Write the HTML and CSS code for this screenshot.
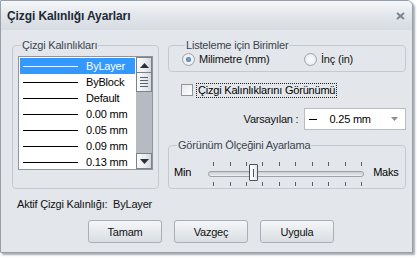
FILE: index.html
```html
<!DOCTYPE html>
<html lang="tr">
<head>
    <meta charset="UTF-8">
    <meta name="viewport" content="width=device-width, initial-scale=1.0">
    <title>Çizgi Kalınlığı Ayarları</title>
    <link rel="stylesheet" href="styles.css">
</head>
<body>

    <div class="window">
        <div class="titlebar">
            <span class="title">Çizgi Kalınlığı Ayarları</span>
            <svg class="close" width="9" height="8" viewBox="0 0 9 8">
                <path d="M1 1 L8 7 M8 1 L1 7" stroke="#7b8591" stroke-width="2" fill="none"/>
            </svg>
        </div>

        <div class="content">
            <div class="main">
                <!-- çizgi kalınlıkları listesi -->
                <fieldset class="group group-list">
                    <legend>Çizgi Kalınlıkları</legend>
                    <div class="listbox">
                        <div class="rows">
                            <div class="row selected"><span class="line"></span><span>ByLayer</span></div>
                            <div class="row"><span class="line"></span><span>ByBlock</span></div>
                            <div class="row"><span class="line"></span><span>Default</span></div>
                            <div class="row"><span class="line"></span><span>0.00 mm</span></div>
                            <div class="row"><span class="line"></span><span>0.05 mm</span></div>
                            <div class="row"><span class="line"></span><span>0.09 mm</span></div>
                            <div class="row"><span class="line"></span><span>0.13 mm</span></div>
                        </div>
                        <div class="scrollbar">
                            <div class="sb-btn">
                                <svg width="9" height="5" viewBox="0 0 9 5"><path d="M0 5 L4.5 0 L9 5 Z" fill="#2b2f36"/></svg>
                            </div>
                            <div class="sb-thumb">
                                <span></span><span></span><span></span><span></span>
                            </div>
                            <div class="sb-track"></div>
                            <div class="sb-btn">
                                <svg width="9" height="5" viewBox="0 0 9 5"><path d="M0 0 L4.5 5 L9 0 Z" fill="#2b2f36"/></svg>
                            </div>
                        </div>
                    </div>
                </fieldset>

                <div class="side">
                    <!-- birimler -->
                    <fieldset class="group group-units">
                        <legend>Listeleme için Birimler</legend>
                        <div class="radios">
                            <label class="radio radio-mm"><span class="dot checked"></span>Milimetre (mm)</label>
                            <label class="radio"><span class="dot"></span>İnç (in)</label>
                        </div>
                    </fieldset>

                    <div class="check-row">
                        <span class="checkbox"></span>
                        <span class="focus">Çizgi Kalınlıklarını Görünümü</span>
                    </div>

                    <div class="default-row">
                        <span class="default-label">Varsayılan :</span>
                        <div class="combo">
                            <span class="dash"></span>
                            <span class="combo-text">0.25 mm</span>
                            <svg class="combo-arrow" width="7" height="4" viewBox="0 0 7 4"><path d="M0 0 L3.5 4 L7 0 Z" fill="#8a9099"/></svg>
                        </div>
                    </div>

                    <!-- görünüm ölçeği -->
                    <fieldset class="group group-scale">
                        <legend>Görünüm Ölçeğini Ayarlama</legend>
                        <div class="scale-row">
                            <span>Min</span>
                            <div class="slider">
                                <div class="ticks ticks-top">
                                    <i></i><i></i><i></i><i></i><i></i><i></i><i></i><i></i><i></i><i></i>
                                </div>
                                <div class="track"></div>
                                <div class="ticks ticks-bottom">
                                    <i></i><i></i><i></i><i></i><i></i><i></i><i></i><i></i><i></i><i></i>
                                </div>
                                <div class="thumb"><span></span></div>
                            </div>
                            <span>Maks</span>
                        </div>
                    </fieldset>
                </div>
            </div>

            <p class="active">Aktif Çizgi Kalınlığı:&nbsp;&nbsp;ByLayer</p>

            <div class="buttons">
                <button class="btn">Tamam</button>
                <button class="btn">Vazgeç</button>
                <button class="btn">Uygula</button>
            </div>
        </div>
    </div>

</body>
</html>
```

FILE: styles.css
```css
body {
    margin: 0;
    padding: 0;
    width: 417px;
    height: 258px;
    background-color: #ffffff;
    font-family: 'Liberation Sans', Arial, sans-serif;
    font-size: 11px;
    letter-spacing: -0.2px;
    color: #000;
}
.window {
    width: 411px;
    height: 251px;
    border: 1px solid #959fab;
    border-radius: 1px 6px 1px 1px;
    background-color: #e3e7eb;
    box-shadow: 2px 2px 2px rgba(60, 70, 85, 0.45);
    overflow: hidden;
}
.titlebar {
    height: 29px;
    display: flex;
    align-items: center;
    justify-content: space-between;
    padding: 0 7px 0 6px;
    background: linear-gradient(#f6f7f9, #e4e8ec 45%, #d6dbe1);
}
.title {
    font-weight: bold;
    font-size: 12px;
    letter-spacing: -0.1px;
    color: #1e2a38;
    margin-top: 1px;
}
.close {
    margin-top: 1px;
}
.content {
    padding: 8px 0 0 11px;
}
.main {
    display: flex;
    gap: 9px;
}
.group {
    margin: 0;
    border: 1px solid #c3cad2;
    border-radius: 4px;
    min-width: 0;
}
.group legend {
    padding: 0 1px;
    line-height: 14px;
    margin-left: 3px;
    color: #3a4450;
}
.group-list {
    width: 135px;
    padding: 4px 5px 18px 5px;
}
.listbox {
    display: flex;
    width: 133px;
    height: 112px;
    border: 1px solid #8e959e;
    background-color: #ffffff;
    overflow: hidden;
}
.rows {
    flex: 1;
    padding: 1px;
}
.row {
    display: flex;
    align-items: center;
    height: 16px;
    gap: 8px;
}
.row .line {
    width: 55px;
    height: 1px;
    margin-left: 3px;
    background-color: #000;
}
.row.selected {
    background-color: #3399ff;
    color: #ffffff;
}
.row.selected .line {
    background-color: #ffffff;
}
.scrollbar {
    width: 16px;
    display: flex;
    flex-direction: column;
    background-color: #b6bbc3;
}
.sb-btn {
    height: 14px;
    border: 1px solid #7b828b;
    background: linear-gradient(to right, #fafbfc, #e8ebee 60%, #d4d8dd);
    display: flex;
    align-items: center;
    justify-content: center;
    box-sizing: content-box;
}
.sb-thumb {
    height: 18px;
    border: 1px solid #7b828b;
    border-top: none;
    background: linear-gradient(to right, #fafbfc, #e8ebee 60%, #d4d8dd);
    display: flex;
    flex-direction: column;
    align-items: center;
    justify-content: center;
    gap: 2px;
}
.sb-thumb span {
    width: 8px;
    height: 1px;
    background-color: #59616b;
}
.sb-track {
    flex: 1;
}
.side {
    width: 238px;
    display: flex;
    flex-direction: column;
}
.group-units {
    padding: 0 0 5px 13px;
}
.radios {
    display: flex;
    height: 14px;
    align-items: center;
}
.radio {
    display: flex;
    align-items: center;
    gap: 4px;
    color: #111;
}
.radio-mm {
    width: 122px;
}
.dot {
    width: 11px;
    height: 11px;
    border: 1px solid #9ea5ae;
    border-radius: 50%;
    background: radial-gradient(#ffffff, #dfe3e8);
    box-sizing: content-box;
    display: flex;
    align-items: center;
    justify-content: center;
}
.dot.checked::after {
    content: "";
    width: 5px;
    height: 5px;
    border-radius: 50%;
    background: radial-gradient(#8fb3d9, #2b5d93);
}
.check-row {
    display: flex;
    align-items: center;
    gap: 4px;
    margin: 11px 0 0 13px;
    height: 14px;
}
.checkbox {
    width: 10px;
    height: 10px;
    border: 1px solid #8e959e;
    background: linear-gradient(135deg, #e6e9ed, #ffffff);
}
.focus {
    outline: 1px dotted #222;
    padding: 0 1px;
    line-height: 13px;
}
.default-row {
    display: flex;
    align-items: center;
    margin-top: 11px;
    height: 22px;
}
.default-label {
    width: 131px;
    text-align: right;
    color: #111;
}
.combo {
    width: 100px;
    height: 20px;
    margin-left: 6px;
    border: 1px solid #b5bcc4;
    background-color: #ffffff;
    display: flex;
    align-items: center;
}
.dash {
    width: 8px;
    height: 1px;
    margin-left: 4px;
    background-color: #000;
}
.combo-text {
    margin-left: 12px;
    flex: 1;
}
.combo-arrow {
    margin-right: 7px;
}
.group-scale {
    margin-top: 8px;
    padding: 9px 0 5px 5px;
}
.scale-row {
    display: flex;
    align-items: center;
    height: 22px;
}
.slider {
    position: relative;
    width: 156px;
    height: 22px;
    margin: 0 9px 0 17px;
}
.ticks {
    display: flex;
    justify-content: space-between;
    padding: 0 2px 0 5px;
    height: 4px;
}
.ticks i {
    width: 1px;
    background-color: #55606c;
}
.ticks-top {
    margin-top: 1px;
}
.track {
    height: 4px;
    margin: 5px 0;
    border: 1px solid #9aa2ab;
    border-radius: 3px;
    background: linear-gradient(#c9ced4, #eef0f2);
}
.thumb {
    position: absolute;
    left: 41px;
    top: 3px;
    width: 7px;
    height: 15px;
    border: 1px solid #4a525c;
    border-radius: 1px;
    background: linear-gradient(to right, #ffffff, #e4e7eb);
    display: flex;
    align-items: center;
    justify-content: center;
}
.thumb span {
    width: 1px;
    height: 8px;
    background-color: #505862;
}
.active {
    margin: 8px 0 0 5px;
    line-height: 14px;
    color: #111;
}
.buttons {
    display: flex;
    gap: 12px;
    margin-top: 9px;
    padding-left: 76px;
}
.btn {
    width: 74px;
    height: 23px;
    padding: 0;
    border: 1px solid #a7afb8;
    border-radius: 3px;
    background: linear-gradient(#f5f6f8, #e7eaed 50%, #dadee3);
    font-family: inherit;
    font-size: 11px;
    letter-spacing: -0.2px;
    color: #111;
}
```
